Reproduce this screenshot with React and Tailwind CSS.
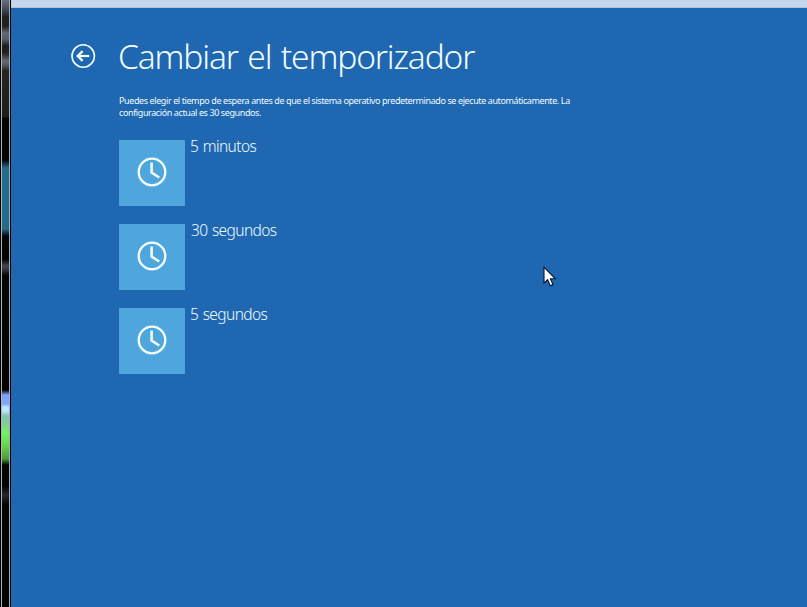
const options = [
  { label: '5 minutos', style: 'pl-[5px] tracking-[-0.6px]' },
  { label: '30 segundos', style: 'pl-[6px] tracking-[-0.6px]' },
  { label: '5 segundos', style: 'pl-[5px] tracking-[-0.6px]' },
];

function BackIcon() {
  return (
    <svg width="26" height="26" viewBox="0 0 26 26" fill="none" stroke="#f2ffff">
      <circle cx="13.2" cy="13" r="11.2" strokeWidth="1.6" />
      <path d="M19.3 13H8" strokeWidth="2.2" />
      <path d="M12.6 8.2L7.8 13l4.8 4.8" strokeWidth="2.4" />
    </svg>
  );
}

function ClockIcon() {
  return (
    <svg width="30" height="30" viewBox="0 0 30 30" fill="none" stroke="#f4ffff">
      <circle cx="15" cy="15" r="13.3" strokeWidth="2.3" />
      <path d="M14.6 5.5V15.5L22.2 20.5" strokeWidth="2.5" />
    </svg>
  );
}

function Cursor() {
  return (
    <svg className="absolute left-[543px] top-[266px]" width="14" height="22" viewBox="0 0 14 22">
      <path d="M1 1.2V17.2L4.6 13.8L7.2 19.8L10 18.6L7.5 12.8H12.4Z" fill="#fff" stroke="#06142c" strokeWidth="1.1" />
    </svg>
  );
}

export default function App() {
  return (
    <div className="relative flex h-[607px] w-[807px] overflow-hidden bg-[#1f67b1] font-['Noto_Sans','Open_Sans',sans-serif] text-[#f0fcff]">
      <div className="flex w-[11px] shrink-0 bg-black">
        <div className="ml-px w-px bg-[#b4b4b4]" />
        <div className="w-[7px] bg-[linear-gradient(to_bottom,#667080_0px,#454b55_9px,#202020_17px,#202020_26px,#606975_33px,#565e69_39px,#1c1c1c_46px,#222_53px,#626b78_61px,#505861_65px,#242424_71px,#1d1d1d_117px,#030303_118px,#030303_160px,#256b89_168px,#256b89_229px,#060606_236px,#030303_259px,#45474f_266px,#30323a_270px,#050505_275px,#030303_390px,#7da5ff_395px,#7da5ff_404px,#b6e6ff_407px,#b6e6ff_411px,#84c3aa_416px,#80cf98_424px,#71f45f_433px,#67d64c_445px,#4c9b37_459px,#050505_465px,#030303_486px,#22282b_495px,#030303_505px)]" />
        <div className="w-px bg-[#a6adb0]" />
      </div>
      <main className="flex-1">
        <div className="h-2 border-b border-[#b0c6de] bg-[#c5d6ed]" />
        <header className="flex h-[80px] items-start pl-[59px] pt-[35px]">
          <BackIcon />
          <h1 className="ml-[22px] -mt-[11px] whitespace-nowrap text-[33.5px] font-light leading-[48px] tracking-[-1.15px] [word-spacing:2px]">
            Cambiar el temporizador
          </h1>
        </header>
        <p className="ml-[108px] mt-[7px] whitespace-nowrap text-[9px] leading-[12px] tracking-[-0.4px]">
          Puedes elegir el tiempo de espera antes de que el sistema operativo predeterminado se ejecute automáticamente. La
          <br />
          configuración actual es 30 segundos.
        </p>
        <div className="ml-[108px] mt-[21px] flex flex-col gap-[18px]">
          {options.map((o) => (
            <button key={o.label} className="flex h-[66px] items-start text-left">
              <span className="flex size-[66px] items-center justify-center bg-[#4ea6dc] pb-[2px]">
                <ClockIcon />
              </span>
              <span className={`whitespace-nowrap text-[15.5px] font-light leading-[13px] [word-spacing:1px] ${o.style}`}>{o.label}</span>
            </button>
          ))}
        </div>
      </main>
      <Cursor />
    </div>
  );
}
